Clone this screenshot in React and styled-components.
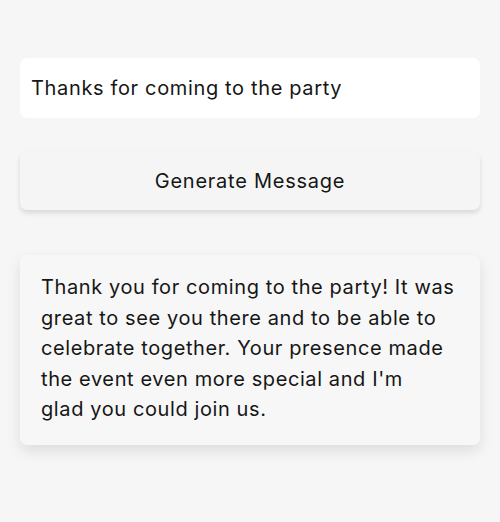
import React from "react";
import styled, { createGlobalStyle } from "styled-components";

const Global = createGlobalStyle`
  html, body { margin: 0; padding: 0; background: #f6f6f6; }
  body { font-family: Inter, "Open Sans", sans-serif; color: #161616; }
`;

const Page = styled.div`
  width: 500px;
  height: 522px;
  box-sizing: border-box;
  padding: 58px 20px 0;
  display: flex;
  flex-direction: column;
`;

const Input = styled.div`
  height: 60px;
  background: #ffffff;
  border-radius: 7px;
  display: flex;
  align-items: center;
  padding: 0 11px;
  font-size: 20px;
  letter-spacing: 0.65px;
`;

const Button = styled.div`
  margin-top: 33px;
  height: 59px;
  background: #f5f5f5;
  border-radius: 7px;
  display: flex;
  align-items: center;
  justify-content: center;
  font-size: 20px;
  letter-spacing: 0.75px;
  box-shadow: 0 3px 5px rgba(0, 0, 0, 0.12);
`;

const Card = styled.div`
  margin-top: 45px;
  background: #f7f7f7;
  border-radius: 7px;
  padding: 17px 21px 20px;
  font-size: 20px;
  line-height: 30.6px;
  letter-spacing: 0.6px;
  box-shadow: 0 6px 14px rgba(0, 0, 0, 0.1);
`;

export default function App() {
  return (
    <>
      <Global />
      <Page>
        <Input>Thanks for coming to the party</Input>
        <Button>Generate Message</Button>
        <Card>
          Thank you for coming to the party! It was great to see you there and
          to be able to celebrate together. Your presence made the event even
          more special and I'm
          <br />
          glad you could join us.
        </Card>
      </Page>
    </>
  );
}
